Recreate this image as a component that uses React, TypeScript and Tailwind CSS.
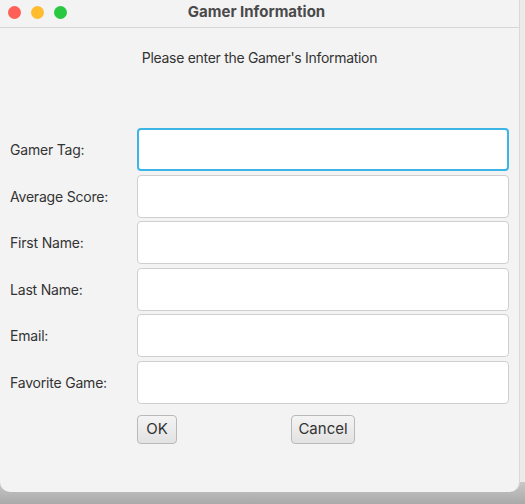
export default function App() {
  const fields = [
    'Gamer Tag:',
    'Average Score:',
    'First Name:',
    'Last Name:',
    'Email:',
    'Favorite Game:',
  ];

  return (
    <div
      className="w-[525px] h-[504px] bg-[#ebebeb] overflow-hidden flex flex-col"
      style={{ fontFamily: 'Inter, "Open Sans", sans-serif' }}
    >
      <div className="w-[520px] h-[492px] shrink-0 bg-[#f3f3f3] rounded-b-[10px] border-r border-[#d8d8d8] relative z-10">
        {/* title bar */}
        <div className="h-[28px] border-b border-[#d6d6d6] flex items-center relative">
          <div className="flex gap-[10px] pl-[8px] pb-[2px]">
            <span className="w-[13px] h-[13px] rounded-full bg-[#fe5f57]" />
            <span className="w-[13px] h-[13px] rounded-full bg-[#febc2e]" />
            <span className="w-[13px] h-[13px] rounded-full bg-[#28c840]" />
          </div>
          <div className="absolute inset-0 flex items-center justify-center pr-[6px] pb-[2px] text-[15px] font-bold text-[#4a4a4a]">
            Gamer Information
          </div>
        </div>

        <div className="text-center text-[14px] text-[#333] mt-[19px] tracking-[-0.3px]">
          Please enter the Gamer's Information
        </div>

        <div className="mt-[60px] flex flex-col gap-[3.6px]">
          {fields.map((label, i) => (
            <div key={label} className="flex items-center h-[43px]">
              <div className="w-[137px] pl-[10px] text-[14px] text-[#333] tracking-[-0.2px]">
                {label}
              </div>
              <div
                className={
                  i === 0
                    ? 'w-[372px] h-[43px] bg-white rounded-[4px] border-2 border-[#3db4e6]'
                    : 'w-[372px] h-[43px] bg-white rounded-[4px] border border-[#cfcfcf]'
                }
              />
            </div>
          ))}
        </div>

        <div className="flex mt-[11px] pl-[137px]">
          <button className="w-[40px] h-[29px] rounded-[4px] border border-[#b9b9b9] bg-gradient-to-b from-[#f4f4f4] to-[#e2e2e2] text-[15px] text-[#333]">
            OK
          </button>
          <button className="ml-[114px] w-[64px] h-[29px] rounded-[4px] border border-[#b9b9b9] bg-gradient-to-b from-[#f4f4f4] to-[#e2e2e2] text-[15px] text-[#333]">
            Cancel
          </button>
        </div>
      </div>
      {/* desktop shadow below the window */}
      <div className="-mt-[10px] flex-1 bg-gradient-to-b from-[#c8c8c8] to-[#a9a9a9]" />
    </div>
  );
}
